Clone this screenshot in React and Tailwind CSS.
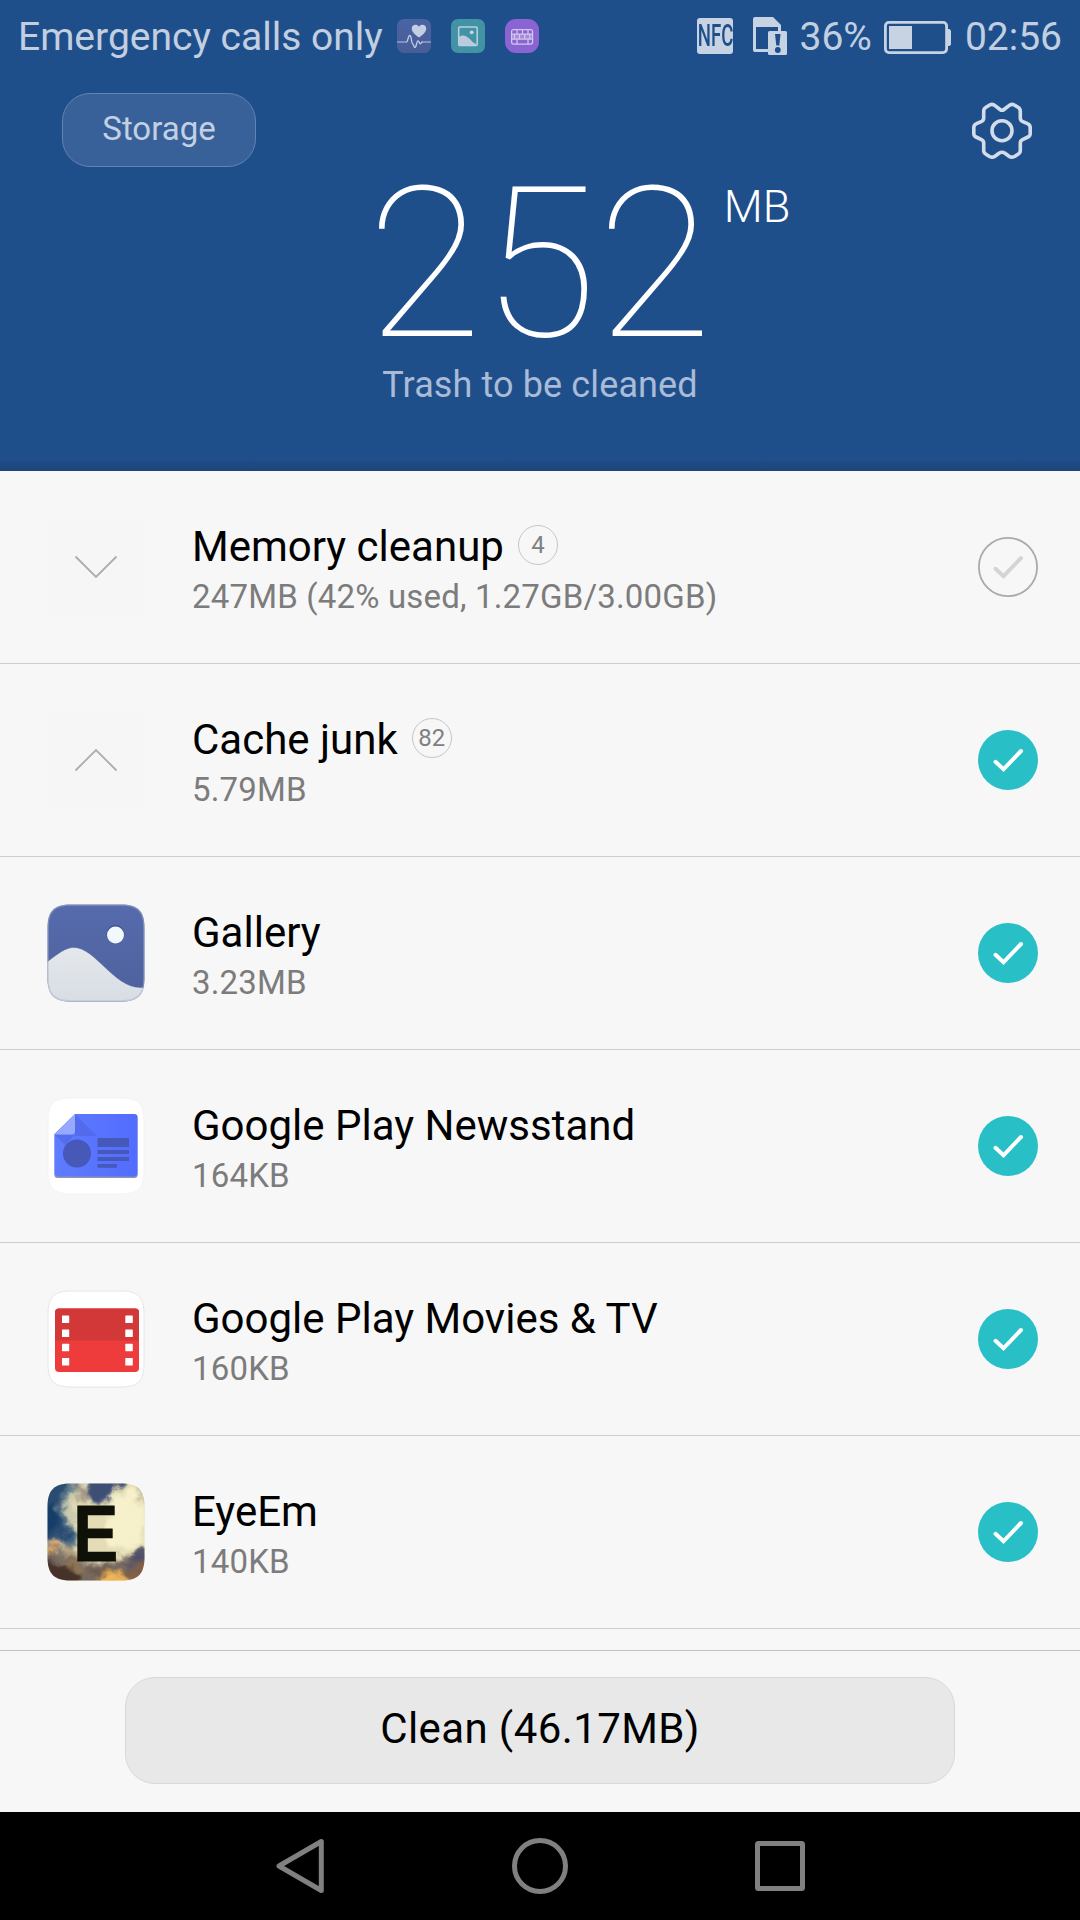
import { useState } from "react";

const junkItems = [
  { id: "memory", title: "Memory cleanup", detail: "247MB (42% used, 1.27GB/3.00GB)", count: 4, icon: "down" },
  { id: "cache", title: "Cache junk", detail: "5.79MB", count: 82, icon: "up" },
  { id: "gallery", title: "Gallery", detail: "3.23MB", icon: "gallery" },
  { id: "newsstand", title: "Google Play Newsstand", detail: "164KB", icon: "newsstand" },
  { id: "movies", title: "Google Play Movies & TV", detail: "160KB", icon: "movies" },
  { id: "eyeem", title: "EyeEm", detail: "140KB", icon: "eyeem" },
];

const HealthIcon = () => (
  <svg width="34" height="34" viewBox="0 0 34 34">
    <defs>
      <linearGradient id="health" x1="0" y1="0" x2="0" y2="1">
        <stop offset="0" stopColor="#4a63a3" />
        <stop offset="1" stopColor="#485d97" />
      </linearGradient>
    </defs>
    <rect width="34" height="34" rx="7" fill="url(#health)" />
    <path d="M0 23h10M25 23h9" stroke="#8da3cd" strokeWidth="1.6" />
    <path d="M22 18.500c-5-3.500-7.200-6-7.200-9 0-4 5-5 7.200-1.700 2.200-3.300 7.200-2.300 7.200 1.700 0 3-2.200 5.500-7.200 9z" fill="#c2cfe3" />
    <path d="M9.500 23c1.500 0 1.500-6.500 3.200-6.500 2 0 1.700 8.500 3 8.500 1.200 0 1 3.500 2.300 3.500 1.500 0 1.500-6.700 3-6.700 1.300 0 1 3 2.300 3 1 0 .7-1.800 2.200-1.800" fill="none" stroke="#c2cfe3" strokeWidth="1.300" />
  </svg>
);

const PictureIcon = () => (
  <svg width="34" height="34" viewBox="0 0 34 34">
    <rect width="34" height="34" rx="7" fill="#4393a7" />
    <rect x="7.700" y="8" width="18.500" height="18.500" rx="1" fill="none" stroke="#b9d2df" strokeWidth="1.500" />
    <path d="M7.500 18C10.500 15.800 14 15.800 17 18.500C19.500 20 21 23.500 25 25v1H7.500z" fill="#bacbde" />
    <circle cx="20.700" cy="13.300" r="1.900" fill="#c4d6e4" />
  </svg>
);

const WallIcon = () => (
  <svg width="34" height="34" viewBox="0 0 34 34">
    <rect width="34" height="34" rx="11" fill="#8a64d2" />
    <rect x="7" y="15" width="20.500" height="5" fill="#a78bdd" />
    <g fill="none" stroke="#d2c8ec" strokeWidth="1.200">
      <rect x="6.600" y="10.600" width="21" height="14.500" rx="2" />
      <path d="M6.600 15.200h21M6.600 20.200h21M12 10.600v4.600M17.500 10.600v4.600M23 10.600v4.600M9.500 15.200v5M14.500 15.200v5M19.700 15.200v5M24.800 15.200v5M12 20.200v5M23 20.200v5" />
    </g>
  </svg>
);

const SimIcon = () => (
  <svg width="34" height="38" viewBox="0 0 34 38">
    <path d="M2 0h18l8 8v6h-3v-4H3v22h12v3H2a2 2 0 0 1-2-2V2a2 2 0 0 1 2-2z" fill="#c7d3e3" />
    <rect x="15" y="14" width="19" height="24" rx="1.500" fill="#c7d3e3" />
    <path d="M22 17h5.500l-1.200 11.500h-3z" fill="#1f4f8b" />
    <circle cx="24.800" cy="33" r="2.900" fill="#1f4f8b" />
  </svg>
);

const BatteryIcon = () => (
  <svg width="67" height="33" viewBox="0 0 67 33">
    <rect x="1.400" y="1.400" width="61.200" height="30.200" rx="3.500" fill="none" stroke="#c7d3e3" strokeWidth="2.800" />
    <rect x="5" y="5" width="23" height="23" fill="#c7d3e3" />
    <path d="M63 8h2.500L67 9.500v14L65.500 25H63z" fill="#c7d3e3" />
  </svg>
);

const GearIcon = () => (
  <svg width="60" height="58" viewBox="0 0 60 58" fill="none" stroke="#d3dcea" strokeWidth="3.600" strokeLinejoin="round">
    <path d="M30 8.300Q31 8.300 32 7.500L37 3.600Q39.500 1.500 42.300 3L46 5.200Q48.300 6.500 48.300 9V16Q48.300 18.300 50.300 19.300L55.500 21.600Q58.200 22.700 58.200 25.500V31.500Q58.200 34 56 35L50.500 37.600Q48.300 38.700 48.300 41V48.500Q48.300 51 46 52.300L42.500 54.500Q39.500 56 37 54.200L33 51.200Q30 49.300 27 51.200L23 54.200Q20.500 56 17.500 54.500L14 52.300Q11.700 51 11.700 48.500V41Q11.700 38.700 9.500 37.600L4 35Q1.800 34 1.800 31.500V25.500Q1.800 22.700 4.500 21.600L9.700 19.300Q11.700 18.300 11.700 16V9Q11.700 6.500 14 5.200L17.700 3Q20.500 1.500 23 3.600L28 7.500Q29 8.300 30 8.300Z" />
    <circle cx="30" cy="28.700" r="10" />
  </svg>
);

const Chevron = ({ up }) => (
  <div className="w-24 h-24 bg-[#f6f6f6] flex items-center justify-center">
    <svg width="44" height="24" viewBox="0 0 44 24" fill="none" stroke="#adadad" strokeWidth="1.800">
      <path d={up ? "M1.500 22.500L22 2L42.500 22.500" : "M1.500 1.500L22 22L42.500 1.500"} />
    </svg>
  </div>
);

const GalleryIcon = () => (
  <svg width="98" height="98" viewBox="0 0 98 98">
    <defs>
      <linearGradient id="sky" x1="0" y1="0" x2="0" y2="1">
        <stop offset="0" stopColor="#566bac" />
        <stop offset="1" stopColor="#4e619d" />
      </linearGradient>
      <linearGradient id="hill" x1="0" y1="0" x2="0" y2="1">
        <stop offset="0" stopColor="#e4e8ec" />
        <stop offset="1" stopColor="#d8dde4" />
      </linearGradient>
      <clipPath id="galleryClip">
        <path d="M24 .5H74C91 .5 97.500 7 97.500 24V74C97.500 91 91 97.500 74 97.500H24C7 97.500 .5 91 .5 74V24C.5 7 7 .5 24 .5Z" />
      </clipPath>
    </defs>
    <g clipPath="url(#galleryClip)">
      <rect width="98" height="98" fill="url(#sky)" />
      <path d="M0 58C11 50 18 43.500 27 43.500C48 43.500 67 83.500 93 83.500H98V98H0Z" fill="url(#hill)" stroke="#4a5c94" strokeOpacity=".35" />
      <circle cx="68.500" cy="30" r="9" fill="#3f5291" />
      <circle cx="68.500" cy="31" r="8.500" fill="#f3f8fc" />
      <path d="M24 1H74C91 1 97 7 97 24V74C97 91 91 97 74 97H24C7 97 1 91 1 74V24C1 7 7 1 24 1Z" fill="none" stroke="#a9b5cb" strokeOpacity=".5" strokeWidth="1.500" />
    </g>
  </svg>
);

const NewsstandIcon = () => (
  <svg width="98" height="98" viewBox="0 0 98 98">
    <defs>
      <linearGradient id="news" x1="0" y1="0" x2="1" y2="0">
        <stop offset="0" stopColor="#5e7cff" />
        <stop offset="1" stopColor="#526cfe" />
      </linearGradient>
    </defs>
    <path d="M24 1H74C91 1 97 7 97 24V74C97 91 91 97 74 97H24C7 97 1 91 1 74V24C1 7 7 1 24 1Z" fill="#fff" stroke="#f3f3fb" />
    <path d="M28 18H87.500a3 3 0 0 1 3 3V78a3 3 0 0 1-3 3H10.500a3 3 0 0 1-3-3V37.500Z" fill="#8c94b8" />
    <path d="M28 17H87.500a3 3 0 0 1 3 3V76.500a3 3 0 0 1-3 3H10.500a3 3 0 0 1-3-3V37Z" fill="url(#news)" />
    <path d="M28 17L50 39H28Z" fill="#4c63df" opacity=".55" />
    <path d="M7.500 37.500H28L18 48Z" fill="#4c63df" opacity=".55" />
    <path d="M28 17V34.500a3 3 0 0 1-3 3H7.500Z" fill="#97a9fd" />
    <circle cx="30" cy="56.500" r="14" fill="#4658b8" />
    <path d="M50.500 41H82v9H50.500ZM50.500 53H82v4H50.500ZM50.500 60H82v4H50.500ZM50.500 67H70v3.700H50.500Z" fill="#4658b8" />
  </svg>
);

const MoviesIcon = () => (
  <svg width="98" height="98" viewBox="0 0 98 98">
    <path d="M24 1H74C91 1 97 7 97 24V74C97 91 91 97 74 97H24C7 97 1 91 1 74V24C1 7 7 1 24 1Z" fill="#fff" stroke="#e6e6e6" />
    <rect x="8" y="18.500" width="84" height="63.500" rx="4" fill="#ee3b3b" />
    <path d="M8 50.500V22.500a4 4 0 0 1 4-4H88a4 4 0 0 1 4 4V50.500Z" fill="#d23838" />
    {[25.500, 39.500, 53.700, 68].map((y) => (
      <g key={y} fill="#fff">
        <rect x="15" y={y} width="7.200" height="7.500" rx=".6" />
        <rect x="78.300" y={y} width="7.500" height="7.500" rx=".6" />
      </g>
    ))}
  </svg>
);

const EyeEmIcon = () => (
  <svg width="98" height="98" viewBox="0 0 98 98">
    <defs>
      <clipPath id="eyeClip">
        <path d="M24 .5H74C91 .5 97.500 7 97.500 24V74C97.500 91 91 97.500 74 97.500H24C7 97.500 .5 91 .5 74V24C.5 7 7 .5 24 .5Z" />
      </clipPath>
      {/* ragged, slightly blurred edges for the clouds */}
      <filter id="cloud" x="-30%" y="-30%" width="160%" height="160%">
        <feTurbulence type="fractalNoise" baseFrequency="0.07" numOctaves="4" seed="4" result="noise" />
        <feGaussianBlur in="SourceGraphic" stdDeviation="2.600" result="blurred" />
        <feDisplacementMap in="blurred" in2="noise" scale="18" xChannelSelector="R" yChannelSelector="G" />
      </filter>
    </defs>
    <g clipPath="url(#eyeClip)">
      <rect width="98" height="98" fill="#e3dcb4" />
      <g filter="url(#cloud)">
        <path d="M-12-12H34L24 12L16 26L24 44L34 60L-12 68Z" fill="#55748a" />
        <path d="M-12-12H30L14 12L10 30L24 46L26 54L-12 60Z" fill="#2b4c72" />
        <path d="M-12 20L8 24L10 46L-12 52Z" fill="#183d68" />
        <path d="M24 2L38 4L46 16L32 20Z" fill="#a19686" />
        <path d="M38-12H86L70 6L60 20L50 20L42 12Z" fill="#3e4f75" />
        <path d="M84-12H110V40L98 24Z" fill="#b5ad90" />
        <path d="M68 12L88 6L98 30V62L60 68V22Z" fill="#f6f1cb" />
        <path d="M18 14L24 14L26 28L34 36L28 42L20 30Z" fill="#c5c6ad" />
        <path d="M-12 66L14 68L34 78L54 80L72 74L110 66V110H-12Z" fill="#77695e" />
        <path d="M12 62L30 62L32 76L18 70Z" fill="#b6a27e" />
        <path d="M-12 74L14 80L32 92L30 110H-12Z" fill="#46302a" />
        <path d="M14 78L34 80L38 90L24 88Z" fill="#8f7455" />
        <path d="M76 76L110 62V84L86 86Z" fill="#4f5067" />
        <path d="M38 86L68 84L62 94L44 94Z" fill="#6c5850" />
        <path d="M52 92L72 88L82 96L70 104H50Z" fill="#f0b655" />
        <path d="M80 88L104 82V98H82Z" fill="#86603f" />
        <path d="M-2 62L8 60L8 66L-2 70Z" fill="#eab56a" />
      </g>
      <text x="26.200" y="77.500" textLength="45" lengthAdjust="spacingAndGlyphs" fontSize="79.500" fontWeight="700" fontFamily="Liberation Sans, sans-serif" fill="#0f1008" stroke="#0f1008" strokeWidth=".8">E</text>
    </g>
  </svg>
);

const ItemIcon = ({ name }) => {
  if (name === "gallery") return <GalleryIcon />;
  if (name === "newsstand") return <NewsstandIcon />;
  if (name === "movies") return <MoviesIcon />;
  if (name === "eyeem") return <EyeEmIcon />;
  return <Chevron up={name === "up"} />;
};

const CheckCircle = ({ checked, onClick }) => (
  <button onClick={onClick} className="w-[60px] h-[60px]">
    <svg width="60" height="60" viewBox="0 0 60 60" fill="none">
      {checked ? (
        <circle cx="30" cy="30" r="30" fill="#29bfc7" />
      ) : (
        <circle cx="30" cy="30" r="29.100" stroke="#aaaaaa" strokeWidth="1.800" />
      )}
      <path d="M17.500 31.800L25.500 39.300L43 21" stroke={checked ? "#ffffff" : "#d4d4d4"} strokeWidth="4" strokeLinecap="round" />
    </svg>
  </button>
);

const JunkRow = ({ item, checked, onToggle }) => (
  <div className="h-[193px] border-b border-[#cdcdcd] flex items-center pr-[42px]">
    <div className="w-48 flex justify-center">
      <ItemIcon name={item.icon} />
    </div>
    <div className="flex-1 pt-[3px]">
      <div className="flex items-center h-[50px]">
        <span className="text-[42px] leading-[50px] text-black">{item.title}</span>
        {item.count && (
          <span className="ml-[14px] mb-[4px] w-10 h-10 rounded-full border border-[#c6c6c6] flex items-center justify-center text-2xl leading-none text-[#808080]">
            {item.count}
          </span>
        )}
      </div>
      <div className="mt-[5px] text-[33px] leading-[39px] tracking-[0.18px] text-[#7c7c7c]">{item.detail}</div>
    </div>
    <CheckCircle checked={checked} onClick={onToggle} />
  </div>
);

const StatusBar = () => (
  <div className="h-[74px] pl-[18px] pr-[18px] flex items-center justify-between text-[39px] leading-[46px] text-[#c2cfe1]">
    <div className="flex items-center">
      <span>Emergency calls only</span>
      <div className="ml-[14px] mb-[2px] flex gap-5">
        <HealthIcon />
        <PictureIcon />
        <WallIcon />
      </div>
    </div>
    <div className="flex items-center">
      <span className="mb-[2px] w-9 h-9 rounded-[3px] bg-[#c7d3e3] flex items-center justify-center overflow-hidden">
        <span className="text-[31px] leading-9 font-medium text-[#1f4f8b] scale-x-[0.6]">NFC</span>
      </span>
      <span className="ml-5 mb-[2px]">
        <SimIcon />
      </span>
      <span className="ml-3">36%</span>
      <span className="ml-3">
        <BatteryIcon />
      </span>
      <span className="ml-[14px]">02:56</span>
    </div>
  </div>
);

const NavBar = () => (
  <div className="h-[108px] bg-black flex items-center justify-center">
    <svg width="530" height="58" viewBox="0 0 530 58" fill="none" stroke="#808080" strokeWidth="5" strokeLinejoin="round">
      <path d="M46.300 4.500V53.500L4 29Z" />
      <circle cx="265" cy="29" r="25.500" />
      <rect x="482.500" y="6.500" width="45" height="45" rx="1" />
    </svg>
  </div>
);

const App = () => {
  const [selected, setSelected] = useState({
    cache: true,
    gallery: true,
    newsstand: true,
    movies: true,
    eyeem: true,
  });

  const toggle = (id) => setSelected({ ...selected, [id]: !selected[id] });

  return (
    <div className="w-[1080px] h-[1920px] flex flex-col overflow-hidden bg-[#f7f7f7] font-[Roboto,sans-serif]">
      <header className="h-[471px] flex flex-col bg-[linear-gradient(to_bottom,#1f4f8b_458px,#1e447a_471px)]">
        <StatusBar />
        <div className="h-[95px] pt-[19px] pl-[62px] pr-12 flex items-start justify-between">
          <button className="w-[194px] h-[74px] pb-[3px] rounded-[28px] border border-[#6383b0] bg-[#38619a] text-[33px] text-[#c3d0e4]">
            Storage
          </button>
          <button className="mt-[9px]">
            <GearIcon />
          </button>
        </div>
        <div className="pl-[367px] flex items-start text-white">
          <span className="text-[210px] leading-[190px] font-thin">252</span>
          <span className="ml-3 mt-[11px] text-[45px] leading-[54px] font-light">MB</span>
        </div>
        <p className="mt-1 text-center text-[36px] leading-[44px] tracking-[0.12px] text-[#a9bbd6]">Trash to be cleaned</p>
      </header>

      <main className="h-[1179px]">
        {junkItems.map((item) => (
          <JunkRow key={item.id} item={item} checked={selected[item.id]} onToggle={() => toggle(item.id)} />
        ))}
      </main>

      <footer className="h-[162px] border-t border-[#c2c2c2] flex justify-center pt-[26px]">
        <button className="w-[830px] h-[107px] pb-1 rounded-[30px] border border-[#d8d8d8] bg-[#e8e8e8] text-[42px] tracking-[0.4px] text-black">
          Clean (46.17MB)
        </button>
      </footer>
      <NavBar />
    </div>
  );
};

export default App;
